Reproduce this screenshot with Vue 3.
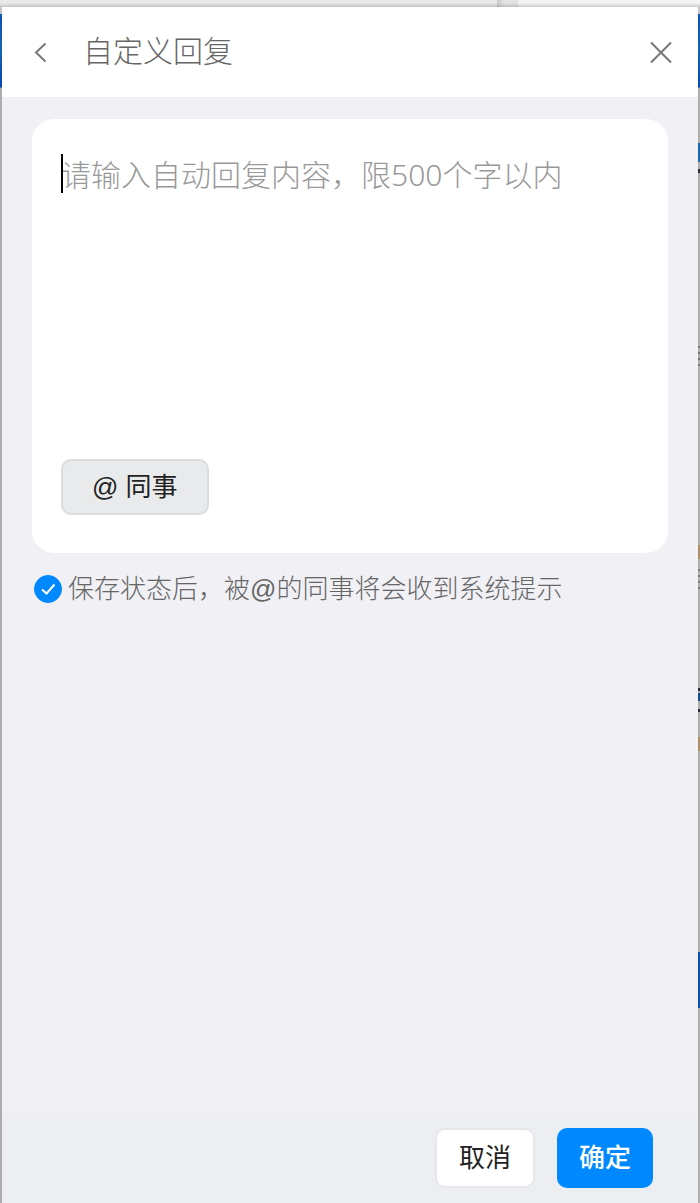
<script setup>
import { ref } from 'vue'

const reply = ref('')
const notify = ref(true)
const specks = ref([
  { id: 1, kind: 'blue', top: 143, height: 19 },
  { id: 2, kind: 'dark', top: 169, height: 4 },
  { id: 3, kind: 'lines', top: 346, height: 24 },
  { id: 4, kind: 'tan', top: 545, height: 14 },
  { id: 5, kind: 'lines', top: 569, height: 22 },
  { id: 6, kind: 'dark', top: 688, height: 3 },
  { id: 7, kind: 'navy', top: 693, height: 8 },
  { id: 8, kind: 'dark', top: 709, height: 3 },
  { id: 9, kind: 'tan', top: 737, height: 14 },
  { id: 10, kind: 'deep', top: 952, height: 56 }
])
</script>

<template>
  <div class="desktop">
    <span
      v-for="s in specks"
      :key="s.id"
      class="speck"
      :class="s.kind"
      :style="{ top: s.top + 'px', height: s.height + 'px' }"
    ></span>
    <div class="backdrop"></div>
    <main class="dialog">
      <header class="header">
        <button class="icon-button" type="button" aria-label="返回">
          <svg width="28" height="28" viewBox="0 0 28 28"><path d="M20.500 5.500 11 14.500 20.500 23.500" /></svg>
        </button>
        <h1 class="title">自定义回复</h1>
        <button class="icon-button" type="button" aria-label="关闭">
          <svg width="28" height="28" viewBox="0 0 28 28"><path d="M4 4.500 24 24.500M24 4.500 4 24.500" /></svg>
        </button>
      </header>

      <section class="content">
        <div class="card">
          <div class="editor">
            <textarea
              v-model="reply"
              class="field"
              aria-label="自动回复内容"
              maxlength="500"
              placeholder="请输入自动回复内容，限500个字以内"
            ></textarea>
            <span v-if="!reply" class="caret"></span>
          </div>
          <button class="mention" type="button">@ 同事</button>
        </div>
        <label class="notice">
          <span class="check">
            <input v-model="notify" type="checkbox" />
            <svg v-if="notify" width="28" height="28" viewBox="0 0 28 28"><path d="M8 14.500 12.500 18.500 20.500 9.500" /></svg>
          </span>
          <span>保存状态后，被@的同事将会收到系统提示</span>
        </label>
      </section>

      <footer class="footer">
        <button class="action" type="button">取消</button>
        <button class="action primary" type="button">确定</button>
      </footer>
    </main>
  </div>
</template>

<style>
body {
  margin: 0;
}
</style>

<style scoped>
.desktop {
  position: relative;
  box-sizing: border-box;
  display: flex;
  flex-direction: column;
  min-height: 100vh;
  padding: 0 2px;
  background: linear-gradient(#c4c4c4 14px, #0b52b5 14px, #1565b5 50px, #0646b0 87px, #adadad 88px);
  font-family: "Liberation Sans", "Noto Sans CJK SC", sans-serif;
}

.backdrop {
  height: 7px;
  margin: 0 -2px;
  background:
    linear-gradient(transparent 3px, rgba(0, 0, 0, 0.16)),
    linear-gradient(90deg, #e8e9eb 71%, #c9c9c9 71%, #e3e3e3 72%, #e3e3e3 74%, #f2f2f2 74%);
}

.speck {
  position: absolute;
  right: 0;
  width: 2px;
}

.blue { background: #1c65ad; }
.dark { background: #2b2b35; }
.tan { background: #b18a68; }
.navy { background: #124d8f; }
.deep { background: #0c4fa8; }
.lines { background: repeating-linear-gradient(#777 0 2px, #adadad 2px 6px); }

.dialog {
  flex: 1;
  display: flex;
  flex-direction: column;
  background: #f0f0f5;
}

.header {
  display: flex;
  align-items: center;
  height: 90px;
  padding: 0 23px;
  background: #fff;
}

.icon-button {
  display: flex;
  padding: 0;
  border: 0;
  background: none;
}

svg {
  fill: none;
  stroke: #777;
  stroke-width: 2;
}

.title {
  flex: 1;
  margin: 0 0 0 30px;
  color: #666;
  font-size: 30px;
  font-weight: 300;
  line-height: 40px;
}

.content {
  flex: 1;
  padding: 22px 30px;
}

.card {
  padding: 34px 29px 38px;
  border-radius: 22px;
  background: #fff;
}

.editor {
  position: relative;
  display: flex;
  margin-bottom: 20px;
}

.field {
  flex: 1;
  min-width: 0;
  height: 286px;
  padding: 0;
  border: 0;
  outline: 0;
  resize: none;
  background: none;
  color: #222;
  font: 300 30px/44px "Noto Sans", "Noto Sans CJK SC", sans-serif;
}

.field::placeholder {
  color: #999;
  opacity: 1;
}

.caret {
  position: absolute;
  top: 1px;
  left: 0;
  width: 2px;
  height: 39px;
  background: #000;
}

.mention {
  height: 56px;
  padding: 0 29px;
  border: 2px solid #dcdde0;
  border-radius: 10px;
  background: #e9eaec;
  color: #222;
  font: 400 26px/36px "Liberation Sans", "Noto Sans CJK SC", sans-serif;
}

.notice {
  display: flex;
  align-items: center;
  gap: 6px;
  margin-top: 16px;
  padding-left: 2px;
  color: #666;
  font-size: 26px;
  font-weight: 300;
  line-height: 40px;
}

.check {
  display: grid;
}

.check > * {
  grid-area: 1 / 1;
}

.check input {
  width: 28px;
  height: 28px;
  margin: 0;
  appearance: none;
  border: 1px solid #0089ff;
  border-radius: 50%;
  background: #fff;
}

.check input:checked {
  background: #0089ff;
}

.check svg {
  stroke: #fff;
  pointer-events: none;
}

.footer {
  display: flex;
  justify-content: flex-end;
  gap: 22px;
  padding: 20px 45px 15px;
  background: linear-gradient(#f0f0f5, #edeef2 12px);
}

.action {
  height: 60px;
  padding: 0 22px;
  border: 2px solid #e6e7ea;
  border-radius: 10px;
  background: #fff;
  color: #222;
  font: 400 26px/36px "Liberation Sans", "Noto Sans CJK SC", sans-serif;
}

.primary {
  border: 0;
  background: #0089ff;
  color: #fff;
  font-weight: 500;
}
</style>
